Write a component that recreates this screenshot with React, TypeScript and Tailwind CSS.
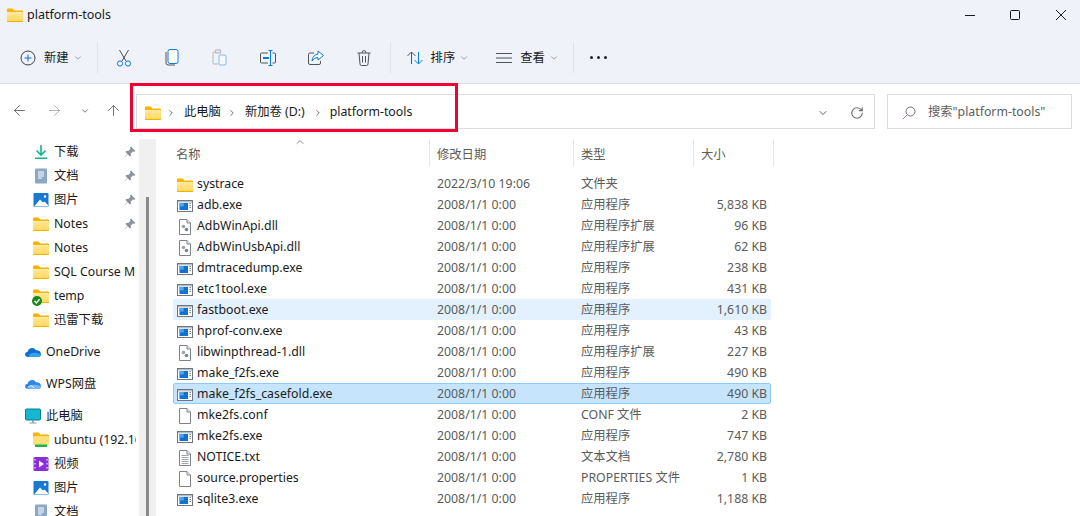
import { ArrowLeft, ArrowRight, ArrowUp, ChevronDown, ChevronRight, ChevronUp, RotateCw } from "lucide-react";

const font = "font-['Noto_Sans','Noto_Sans_CJK_SC',sans-serif]";

const FolderIcon = ({ size = 16 }: { size?: number }) => (
  <svg width={size} height={size} viewBox="0 0 16 16" className="shrink-0">
    <defs>
      <linearGradient id="folderBody" x1="0" y1="0" x2="0" y2="1">
        <stop offset="0" stopColor="#ffe9a3" />
        <stop offset="1" stopColor="#ffd654" />
      </linearGradient>
    </defs>
    <path d="M0 2.500 Q0 1.500 1 1.500 H5.500 L7.500 3.500 H15 Q16 3.500 16 4.500 V6 H0 Z" fill="#f7b500" />
    <path d="M0 5 H15 Q16 5 16 6 V14 Q16 15 15 15 H1 Q0 15 0 14 Z" fill="url(#folderBody)" />
    <path d="M0 14 H16 V14.200 Q16 15 15 15 H1 Q0 15 0 14.200 Z" fill="#f0b400" />
  </svg>
);

const ExeIcon = () => (
  <svg width="16" height="16" viewBox="0 0 16 16" className="shrink-0">
    <rect x="0.500" y="2.500" width="15" height="11" fill="#fff" stroke="#6f7680" />
    <rect x="1" y="3" width="14" height="1.500" fill="#b9bfc7" />
    <rect x="2.500" y="5" width="8.500" height="7" fill="#0f72d0" />
    <rect x="2.500" y="5" width="4.200" height="3.500" fill="#4fa6ee" />
    <path d="M12.500 5.500h1.500M12.500 7.500h1.500M12.500 9.500h1.500" stroke="#7f868f" strokeWidth="1" />
  </svg>
);

const PageIcon = ({ children }: { children?: React.ReactNode }) => (
  <svg width="16" height="16" viewBox="0 0 16 16" className="shrink-0">
    <path d="M2.500 0.500 H10 L13.500 4 V15.500 H2.500 Z" fill="#fff" stroke="#7f8389" />
    <path d="M10 0.500 V4 H13.500" fill="#eee" stroke="#7f8389" />
    {children}
  </svg>
);

const DllIcon = () => (
  <PageIcon>
    <circle cx="6.500" cy="7.500" r="1.800" fill="#9aa2ab" />
    <circle cx="9.500" cy="10.500" r="1.800" fill="#7d858f" />
  </PageIcon>
);

const TxtIcon = () => (
  <PageIcon>
    <path d="M4.500 5.500h7M4.500 7.500h7M4.500 9.500h7M4.500 11.500h7M4.500 13.500h7" stroke="#a1a5aa" strokeWidth="1" />
  </PageIcon>
);

const Pin = () => (
  <svg width="12" height="12" viewBox="0 0 12 12" className="shrink-0">
    <path d="M7 0.500 L11.500 5 L10.300 5.800 L8.800 5.500 L6.800 7.500 L7 9.500 L5.800 10.500 L3.800 8.300 L1 11 L0.800 10.800 L3.400 7.900 L1.400 5.900 L2.500 4.800 L4.500 5 L6.400 3 L6.200 1.600 Z" fill="#8d9299" />
  </svg>
);

const DownloadIcon = () => (
  <svg width="16" height="16" viewBox="0 0 16 16">
    <path d="M8 1V10.500M3.500 6.500L8 11L12.500 6.500" fill="none" stroke="#10b48c" strokeWidth="1.600" />
    <rect x="2" y="13.500" width="12" height="1.500" fill="#10b48c" />
  </svg>
);

const DocsIcon = () => (
  <svg width="16" height="16" viewBox="0 0 16 16">
    <rect x="2" y="0.500" width="12" height="15" rx="1" fill="#8ba6c6" />
    <path d="M5 4h6M5 6h6M5 8h6M5 10h4" stroke="#fff" strokeWidth="1" />
  </svg>
);

const PicsIcon = () => (
  <svg width="16" height="16" viewBox="0 0 16 16">
    <rect x="0.500" y="1" width="15" height="14" rx="1" fill="#1679d4" />
    <path d="M1 14.500 L7 7.500 L10 10.500 L11.500 9.500 L15 13 V14.500 Z" fill="#fff" />
    <circle cx="12" cy="4.500" r="1.200" fill="#fff" />
  </svg>
);

const TempIcon = () => (
  <div className="relative h-4 w-4 shrink-0">
    <FolderIcon />
    <svg width="10" height="10" viewBox="0 0 10 10" className="absolute -left-px bottom-[-2px]">
      <circle cx="5" cy="5" r="5" fill="#15891c" />
      <path d="M2.500 5L4.400 7L7.600 3.200" fill="none" stroke="#fff" strokeWidth="1.400" />
    </svg>
  </div>
);

const CloudIcon = ({ wps }: { wps?: boolean }) => (
  <svg width="16" height="16" viewBox="0 0 16 16">
    <path d="M3.500 13 Q0 13 0 10.300 Q0 8 2.600 7.700 Q3.600 4 7.200 4 Q9.800 4 11 6.300 Q15.800 6.600 16 10 Q16 13 12.500 13 Z" fill={wps ? "#2f86e8" : "#0e6fd0"} />
    <path d="M4 13 Q3.500 9.500 7.500 9 Q12 8 16 10.500 Q15.800 13 12.500 13 Z" fill={wps ? "#78b8f5" : "#35a2ec"} />
    {wps && <path d="M2.500 12 Q6 7.500 9 12" fill="none" stroke="#fff" strokeWidth="1" />}
  </svg>
);

const PcIcon = () => (
  <svg width="16" height="16" viewBox="0 0 16 16">
    <rect x="0.500" y="1" width="15" height="11" rx="1" fill="#15b8d0" stroke="#0d7c92" />
    <rect x="7" y="12" width="2" height="2.500" fill="#8d9ba5" />
    <rect x="4.500" y="14.500" width="7" height="1" fill="#8d9ba5" />
  </svg>
);

const NetFolder = () => (
  <svg width="16" height="16" viewBox="0 0 16 16" className="shrink-0">
    <path d="M0 1.500 Q0 .5 1 .5 H5.500 L7.500 2.500 H15 Q16 2.500 16 3.500 V5 H0 Z" fill="#f5b400" />
    <rect x="0" y="4" width="16" height="9" rx="1" fill="#ffdf7a" />
    <rect x="2" y="12.500" width="12" height="2.500" fill="#22b14c" />
  </svg>
);

const VideoIcon = () => (
  <svg width="16" height="16" viewBox="0 0 16 16">
    <rect x="0.500" y="1" width="15" height="14" rx="1.500" fill="#8a2fd8" />
    <path d="M2 3v1.500M2 7v1.500M2 11v1.500M14 3v1.500M14 7v1.500M14 11v1.500" stroke="#e5ccff" strokeWidth="1.400" />
    <path d="M6 4.500L11 8L6 11.500Z" fill="#fff" />
  </svg>
);

type NavItem = { label: string; icon: React.ReactNode; indent: boolean; pin?: boolean; after?: boolean };

const navItems: NavItem[] = [
  { label: "下载", icon: <DownloadIcon />, indent: true, pin: true },
  { label: "文档", icon: <DocsIcon />, indent: true, pin: true },
  { label: "图片", icon: <PicsIcon />, indent: true, pin: true },
  { label: "Notes", icon: <FolderIcon />, indent: true, pin: true },
  { label: "Notes", icon: <FolderIcon />, indent: true },
  { label: "SQL Course M", icon: <FolderIcon />, indent: true },
  { label: "temp", icon: <TempIcon />, indent: true },
  { label: "迅雷下载", icon: <FolderIcon />, indent: true, after: true },
  { label: "OneDrive", icon: <CloudIcon />, indent: false, after: true },
  { label: "WPS网盘", icon: <CloudIcon wps />, indent: false, after: true },
  { label: "此电脑", icon: <PcIcon />, indent: false },
  { label: "ubuntu (192.16", icon: <NetFolder />, indent: true },
  { label: "视频", icon: <VideoIcon />, indent: true },
  { label: "图片", icon: <PicsIcon />, indent: true },
  { label: "文档", icon: <DocsIcon />, indent: true },
];

type Row = { name: string; icon: "folder" | "exe" | "dll" | "page" | "txt"; date: string; type: string; size: string; state?: "hover" | "selected" };

const rows: Row[] = [
  { name: "systrace", icon: "folder", date: "2022/3/10 19:06", type: "文件夹", size: "" },
  { name: "adb.exe", icon: "exe", date: "2008/1/1 0:00", type: "应用程序", size: "5,838 KB" },
  { name: "AdbWinApi.dll", icon: "dll", date: "2008/1/1 0:00", type: "应用程序扩展", size: "96 KB" },
  { name: "AdbWinUsbApi.dll", icon: "dll", date: "2008/1/1 0:00", type: "应用程序扩展", size: "62 KB" },
  { name: "dmtracedump.exe", icon: "exe", date: "2008/1/1 0:00", type: "应用程序", size: "238 KB" },
  { name: "etc1tool.exe", icon: "exe", date: "2008/1/1 0:00", type: "应用程序", size: "431 KB" },
  { name: "fastboot.exe", icon: "exe", date: "2008/1/1 0:00", type: "应用程序", size: "1,610 KB", state: "hover" },
  { name: "hprof-conv.exe", icon: "exe", date: "2008/1/1 0:00", type: "应用程序", size: "43 KB" },
  { name: "libwinpthread-1.dll", icon: "dll", date: "2008/1/1 0:00", type: "应用程序扩展", size: "227 KB" },
  { name: "make_f2fs.exe", icon: "exe", date: "2008/1/1 0:00", type: "应用程序", size: "490 KB" },
  { name: "make_f2fs_casefold.exe", icon: "exe", date: "2008/1/1 0:00", type: "应用程序", size: "490 KB", state: "selected" },
  { name: "mke2fs.conf", icon: "page", date: "2008/1/1 0:00", type: "CONF 文件", size: "2 KB" },
  { name: "mke2fs.exe", icon: "exe", date: "2008/1/1 0:00", type: "应用程序", size: "747 KB" },
  { name: "NOTICE.txt", icon: "txt", date: "2008/1/1 0:00", type: "文本文档", size: "2,780 KB" },
  { name: "source.properties", icon: "page", date: "2008/1/1 0:00", type: "PROPERTIES 文件", size: "1 KB" },
  { name: "sqlite3.exe", icon: "exe", date: "2008/1/1 0:00", type: "应用程序", size: "1,188 KB" },
];

const FileIcon = ({ kind }: { kind: Row["icon"] }) => {
  if (kind === "folder") return <FolderIcon />;
  if (kind === "exe") return <ExeIcon />;
  if (kind === "dll") return <DllIcon />;
  if (kind === "txt") return <TxtIcon />;
  return <PageIcon />;
};

const ToolButton = ({ children }: { children: React.ReactNode }) => (
  <div className="flex h-8 w-12 items-center justify-center">{children}</div>
);

const Divider = () => <div className="h-[31px] w-px bg-[#dfe2e8]" />;

const columns = [
  { label: "名称", width: "w-[257px]", pad: "pl-[3px]" },
  { label: "修改日期", width: "w-[144px]", pad: "pl-[7px]" },
  { label: "类型", width: "w-[120px]", pad: "pl-[7px]" },
  { label: "大小", width: "w-[80px]", pad: "pl-[7px]" },
];

export default function App() {
  return (
    <div className={`relative flex h-[516px] w-[1080px] flex-col overflow-hidden bg-white text-[12.3px] text-[#1a1a1a] ${font}`}>
      {/* title + command bar */}
      <div className="h-[84px] shrink-0 border-b border-[#d9dbe0] bg-[#eff2f9]">
        <div className="flex h-[30px] items-center pl-[7px]">
          <FolderIcon />
          <span className="ml-[4px] text-[12.5px]">platform-tools</span>
          <div className="ml-auto flex items-center pr-[14px]">
            <svg width="10" height="10" viewBox="0 0 10 10">
              <path d="M0 5.500H10" stroke="#1a1a1a" />
            </svg>
            <svg width="10" height="10" viewBox="0 0 10 10" className="ml-[35px]">
              <rect x="0.500" y="0.500" width="9" height="9" rx="1" fill="none" stroke="#1a1a1a" />
            </svg>
            <svg width="10" height="10" viewBox="0 0 10 10" className="ml-[36px]">
              <path d="M0 0L10 10M10 0L0 10" stroke="#1a1a1a" />
            </svg>
          </div>
        </div>
        <div className="mt-[12px] flex h-[31px] items-center">
          <svg width="16" height="16" viewBox="0 0 16 16" className="ml-[20px]">
            <circle cx="8" cy="8" r="7" fill="none" stroke="#3a3f46" />
            <path d="M8 4.500v7M4.500 8h7" stroke="#0a6fd0" strokeWidth="1" />
          </svg>
          <span className="ml-[8px] pt-[2px]">新建</span>
          <ChevronDown size={10} className="ml-[4px] text-[#8a8f96]" />
          <div className="ml-[14px]"><Divider /></div>
          <div className="ml-[2px] flex items-center">
            <ToolButton>
              <svg width="16" height="18" viewBox="0 0 16 18">
                <path d="M3.500 1L10 12M12.500 1L6 12" stroke="#4b5058" fill="none" />
                <circle cx="4" cy="14.500" r="2.600" fill="none" stroke="#0a7be0" />
                <circle cx="12" cy="14.500" r="2.600" fill="none" stroke="#0a7be0" />
              </svg>
            </ToolButton>
            <ToolButton>
              <svg width="14" height="17" viewBox="0 0 14 17">
                <path d="M1 3V14Q1 16 3 16H10" fill="none" stroke="#50555c" />
                <rect x="3" y="0.500" width="10" height="14" rx="2" fill="#fff" stroke="#0a7be0" />
              </svg>
            </ToolButton>
            <ToolButton>
              <svg width="15" height="17" viewBox="0 0 15 17" opacity="0.45">
                <path d="M5 3H2Q1 3 1 4V14Q1 15 2 15H6" fill="none" stroke="#70757c" />
                <rect x="3.500" y="1" width="5" height="3" fill="#d8dadf" stroke="#70757c" />
                <rect x="7" y="6" width="7" height="10" rx="1" fill="#fff" stroke="#0a7be0" />
              </svg>
            </ToolButton>
            <ToolButton>
              <svg width="16" height="16" viewBox="0 0 16 16">
                <path d="M8 3H1.500Q.5 3 .5 4V12Q.5 13 1.500 13H8M12.500 3H14.500Q15.500 3 15.500 4V12Q15.500 13 14.500 13H12.500" fill="none" stroke="#50555c" />
                <rect x="3" y="7" width="6" height="2" fill="#0a7be0" />
                <path d="M8.500 .5H12.500M10.500 .5V15.500M8.500 15.500H12.500" fill="none" stroke="#0a7be0" />
              </svg>
            </ToolButton>
            <ToolButton>
              <svg width="16" height="16" viewBox="0 0 16 16">
                <path d="M6 3H2Q.5 3 .5 4.500V13Q.5 14.500 2 14.500H11Q12.500 14.500 12.500 13V11" fill="none" stroke="#50555c" />
                <path d="M10 1L15.500 5.500L10 10V7.500Q6 7.500 4 11Q4.500 5 10 4Z" fill="#fff" stroke="#0a7be0" />
              </svg>
            </ToolButton>
            <ToolButton>
              <svg width="14" height="16" viewBox="0 0 14 16">
                <path d="M.5 3H13.500M5 3Q5 .5 7 .5Q9 .5 9 3M2 3L3 14Q3.200 15.500 4.500 15.500H9.500Q10.800 15.500 11 14L12 3M5.500 6V12.500M8.500 6V12.500" fill="none" stroke="#50555c" />
              </svg>
            </ToolButton>
          </div>
          <div className="ml-[2px]"><Divider /></div>
          <svg width="16" height="14" viewBox="0 0 16 14" className="ml-[16px]">
            <path d="M4.500 13V1M.5 5L4.500 1L8.500 5" fill="none" stroke="#50555c" />
            <path d="M11.500 1V13M7.500 9L11.500 13L15.500 9" fill="none" stroke="#0a7be0" />
          </svg>
          <span className="ml-[8px] pt-[2px]">排序</span>
          <ChevronDown size={10} className="ml-[4px] text-[#8a8f96]" />
          <svg width="16" height="12" viewBox="0 0 16 12" className="ml-[27px]">
            <path d="M0 1.500H16M0 6H16M0 10.500H16" stroke="#50555c" />
          </svg>
          <span className="ml-[8px] pt-[2px]">查看</span>
          <ChevronDown size={10} className="ml-[4px] text-[#8a8f96]" />
          <div className="ml-[14px]"><Divider /></div>
          <div className="ml-[16px] flex gap-[4px]">
            <div className="h-[3px] w-[3px] rounded-full bg-[#222]" />
            <div className="h-[3px] w-[3px] rounded-full bg-[#222]" />
            <div className="h-[3px] w-[3px] rounded-full bg-[#222]" />
          </div>
        </div>
      </div>

      {/* navigation row */}
      <div className="flex h-[55px] shrink-0 items-center">
        <ArrowLeft size={17} strokeWidth={1.200} className="mb-[2px] ml-[11px] text-[#5b6067]" />
        <ArrowRight size={17} strokeWidth={1.200} className="mb-[2px] ml-[18px] text-[#a2a6ab]" />
        <ChevronDown size={10} className="mb-[2px] ml-[17px] text-[#5b6067]" />
        <ArrowUp size={17} strokeWidth={1.200} className="mb-[2px] ml-[15px] text-[#5b6067]" />
        <div className="ml-[14px] flex h-[35px] w-[739px] items-center border border-[#dcdcdc] pl-[8px] pr-[8px] pt-[2px]">
          <FolderIcon />
          <ChevronRight size={10} strokeWidth={2} className="ml-[5px] text-[#5f5f5f]" />
          <span className="ml-[8px]">此电脑</span>
          <ChevronRight size={10} strokeWidth={2} className="ml-[6px] text-[#5f5f5f]" />
          <span className="ml-[8px]">新加卷 (D:)</span>
          <ChevronRight size={10} strokeWidth={2} className="ml-[8px] text-[#5f5f5f]" />
          <span className="ml-[7px]">platform-tools</span>
          <ChevronDown size={12} className="ml-auto text-[#5f5f5f]" />
          <RotateCw size={14} className="ml-[21px] mr-[2px] text-[#6e6e6e]" />
        </div>
        <div className="ml-[12px] flex h-[35px] w-[185px] items-center border border-[#dcdcdc] pl-[14px] pt-[2px]">
          <svg width="14" height="14" viewBox="0 0 14 14">
            <circle cx="8.500" cy="5.500" r="4.500" fill="none" stroke="#6e7077" />
            <path d="M5.300 8.700L.8 13.200" stroke="#a77bb0" />
          </svg>
          <span className="ml-[12px] text-[#5d5d5d]">搜索"platform-tools"</span>
        </div>
      </div>

      {/* body */}
      <div className="flex min-h-0 flex-1">
        <div className="w-[139px] shrink-0 overflow-hidden pt-[1px]">
          {navItems.map((item, i) => (
            <div key={i} className={`flex h-6 items-center ${item.indent ? "pl-[33px]" : "pl-[25px]"} ${item.after ? "mb-2" : ""}`}>
              <div className="flex h-4 w-4 shrink-0 items-center justify-center">{item.icon}</div>
              <span className="ml-[5px] w-[82px] overflow-hidden whitespace-nowrap">{item.label}</span>
              {item.pin && <div className="ml-[-12px]"><Pin /></div>}
            </div>
          ))}
        </div>
        <div className="flex h-full w-[17px] shrink-0 justify-center bg-[#f0f0f0] pt-[58px]">
          <div className="h-full w-[3px] bg-[#8a8a8a]" />
        </div>

        <div className="min-w-0 flex-1 pl-[17px]">
          <div className="relative mt-[1px] flex h-[26px] text-[#5b5b5b]">
            <ChevronUp size={12} className="absolute left-[121px] top-[-4px] text-[#8a8a8a]" />
            {columns.map((c) => (
              <div key={c.label} className={`flex h-[26px] items-center border-r border-[#e5e5e5] pt-[4px] ${c.pad} ${c.width}`}>
                {c.label}
              </div>
            ))}
          </div>
          <div className="w-[598px] pt-[7px]">
            {rows.map((r) => (
              <div
                key={r.name}
                className={`flex h-[21px] items-center rounded-[2px] border pt-[2px] ${
                  r.state === "selected" ? "border-[#90cbf7] bg-[#c6e5fd]" : r.state === "hover" ? "border-[#e2f1fd] bg-[#e2f1fd]" : "border-transparent"
                }`}
              >
                <div className="flex w-[257px] items-center pl-[3px]">
                  <FileIcon kind={r.icon} />
                  <span className="ml-[4px] whitespace-nowrap">{r.name}</span>
                </div>
                <div className="w-[144px] whitespace-nowrap pl-[6px] text-[#5b5b5b]">{r.date}</div>
                <div className="w-[118px] whitespace-nowrap pl-[6px] text-[#5b5b5b]">{r.type}</div>
                <div className="w-[74px] whitespace-nowrap text-right text-[#5b5b5b]">{r.size}</div>
              </div>
            ))}
          </div>
        </div>
      </div>

      {/* red annotation */}
      <div className="absolute left-[130px] top-[83px] h-[49px] w-[328px] border-[3px] border-[#f00033]" />
    </div>
  );
}
